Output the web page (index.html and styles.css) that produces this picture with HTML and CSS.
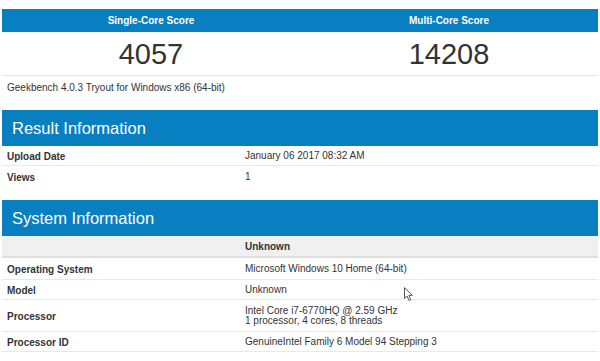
FILE: index.html
```html
<!DOCTYPE html>
<html>
<head>
<meta charset="utf-8">
<link rel="stylesheet" href="styles.css">
</head>
<body>
<div class="page">
  <div class="scores">
    <div class="score-col">
      <div class="score-head">Single-Core Score</div>
      <div class="score-val">4057</div>
    </div>
    <div class="score-col">
      <div class="score-head">Multi-Core Score</div>
      <div class="score-val">14208</div>
    </div>
  </div>
  <div class="version">Geekbench 4.0.3 Tryout for Windows x86 (64-bit)</div>

  <div class="section-head">Result Information</div>
  <div class="table">
    <div class="row"><div class="label">Upload Date</div><div class="value">January 06 2017 08:32 AM</div></div>
    <div class="row last"><div class="label">Views</div><div class="value">1</div></div>
  </div>

  <div class="section-head sys">System Information</div>
  <div class="table">
    <div class="row subhead"><div class="label"></div><div class="value">Unknown</div></div>
    <div class="row os"><div class="label">Operating System</div><div class="value">Microsoft Windows 10 Home (64-bit)</div></div>
    <div class="row"><div class="label">Model</div><div class="value">Unknown</div></div>
    <div class="row tall"><div class="label">Processor</div><div class="value">Intel Core i7-6770HQ @ 2.59 GHz<br>1 processor, 4 cores, 8 threads</div></div>
    <div class="row"><div class="label">Processor ID</div><div class="value">GenuineIntel Family 6 Model 94 Stepping 3</div></div>
  </div>
  <svg class="cursor" width="10" height="15" viewBox="0 0 10 15"><path d="M0.5 0.5 L0.5 11.5 L3 9 L5 13.5 L6.8 12.7 L4.9 8.4 L8.3 8.4 Z" fill="#fff" stroke="#555" stroke-width="1"/></svg>
</div>
</body>
</html>
```
FILE: styles.css
```css
html, body {
  margin: 0;
  padding: 0;
  background: #fff;
}
body {
  font-family: "Liberation Sans", Arial, sans-serif;
  color: #333;
  font-size: 10px;
}
.page {
  position: relative;
  padding: 9px 2px 0 2px;
}
.scores {
  display: flex;
  border-bottom: 1px solid #e6e6e6;
}
.score-col {
  flex: 1;
  text-align: center;
}
.score-head {
  background: #077fc0;
  color: #fff;
  font-weight: bold;
  font-size: 10px;
  height: 23px;
  line-height: 23px;
}
.score-val {
  font-size: 29px;
  height: 43px;
  line-height: 45px;
  color: #333;
}
.version {
  padding: 0 5px;
  height: 24px;
  line-height: 23px;
  font-size: 10px;
}
.section-head {
  margin-top: 10px;
  background: #077fc0;
  color: #fff;
  font-size: 16.5px;
  height: 36px;
  line-height: 37px;
  padding-left: 10px;
}
.section-head.sys {
  margin-top: 13px;
  height: 36px;
  line-height: 36px;
}
.table {
  display: flex;
  flex-direction: column;
}
.row {
  display: grid;
  grid-template-columns: 243px 1fr;
  border-bottom: 1px solid #e8e8e8;
  min-height: 20px;
  align-items: center;
  font-size: 10px;
  padding-top: 1px;
  box-sizing: border-box;
}
.row.last {
  border-bottom: none;
  min-height: 21px;
}
.row .label {
  font-weight: bold;
  padding-left: 5px;
}
.row .value {
  line-height: 10.5px;
}
.row.subhead {
  background: #f0f0f0;
  border-bottom: 2px solid #dedede;
  min-height: 22px;
  padding-top: 2px;
}
.row.subhead .value {
  font-weight: bold;
}
.row.os {
  min-height: 22px;
  padding-top: 2px;
}
.row.tall {
  min-height: 32px;
}
.cursor {
  position: absolute;
  left: 404px;
  top: 287px;
}
```
